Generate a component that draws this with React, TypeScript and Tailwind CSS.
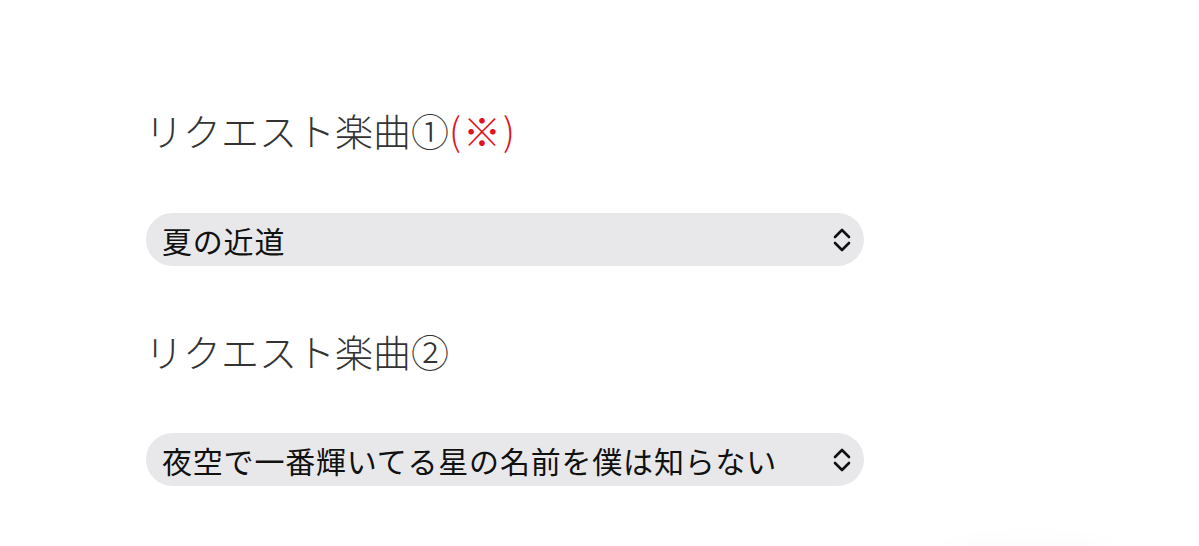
import React from "react";

const songs = ["夏の近道", "夜空で一番輝いてる星の名前を僕は知らない"];

const Chevrons: React.FC = () => (
    <svg width="20" height="26" viewBox="0 0 20 26" fill="none" stroke="#111" strokeWidth="2.6" strokeLinecap="round" strokeLinejoin="round">
        <path d="M3 10 L10 3 L17 10" />
        <path d="M3 16 L10 23 L17 16" />
    </svg>
);

const SongSelect: React.FC<{ value: string }> = ({ value }) => (
    <div className="flex h-[53px] w-[718px] items-center justify-between rounded-full bg-[#e8e8ea] pl-4 pr-[12px]">
        <span className="text-[30px] leading-none tracking-[0.8px] text-[#111]">{value}</span>
        <Chevrons />
    </div>
);

const App: React.FC = () => {
    return (
        <div
            className="relative h-[546px] w-full overflow-hidden bg-white"
            style={{ fontFamily: '"Noto Sans CJK JP", "Noto Sans", sans-serif' }}
        >
            <div className="flex flex-col pl-[145px] pt-[106px]">
                <h2 className="h-[48px] text-[38px] font-light leading-[48px] text-[#333]">
                    リクエスト楽曲①<span className="tracking-[2px] text-[#e0141e]">(※)</span>
                </h2>
                <div className="mt-[59px] pl-px">
                    <SongSelect value={songs[0]} />
                </div>
                <h2 className="mt-[61px] h-[48px] text-[38px] font-light leading-[48px] text-[#333]">
                    リクエスト楽曲②
                </h2>
                <div className="mt-[58px] pl-px">
                    <SongSelect value={songs[1]} />
                </div>
            </div>
            {/* floating button peeking from below */}
            <div className="absolute left-[940px] top-[560px] h-[60px] w-[180px] rounded-full bg-white shadow-[0_0_40px_rgba(0,0,0,0.06)]" />
        </div>
    );
};

export default App;
